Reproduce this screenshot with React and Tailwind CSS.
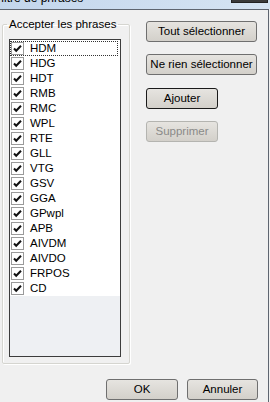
import React from 'react';

const phrases = [
  'HDM', 'HDG', 'HDT', 'RMB', 'RMC', 'WPL', 'RTE', 'GLL', 'VTG',
  'GSV', 'GGA', 'GPwpl', 'APB', 'AIVDM', 'AIVDO', 'FRPOS', 'CD',
];

const CheckBox = () => (
  <span className="flex h-[13px] w-[13px] shrink-0 items-center justify-center border border-[#9a9a9a] bg-white">
    <svg width="9" height="9" viewBox="0 0 9 9">
      <path d="M1 4.5 L3.2 6.8 L8 1.8" fill="none" stroke="#111" strokeWidth="2" />
    </svg>
  </span>
);

const WinButton = ({ children, width, isDefault, disabled }) => (
  <div
    className={`flex h-[21px] items-center justify-center rounded-[3px] border bg-gradient-to-b from-[#e6e4e0] to-[#d3d0ca] text-[11.5px] ${width} ${
      isDefault ? 'border-[#1a1a1a]' : disabled ? 'border-[#b4b4b0]' : 'border-[#6f6f6f]'
    } ${disabled ? 'text-[#8a8a88]' : 'text-black'}`}
  >
    {children}
  </div>
);

export default function App() {
  return (
    <div
      className="relative flex h-[402px] w-[270px] flex-col overflow-hidden bg-[#f0f0f0] text-black"
      style={{ fontFamily: '"Liberation Sans", Arial, sans-serif' }}
    >
      {/* Title bar (cut off) */}
      <div className="h-[9px] shrink-0 overflow-hidden bg-gradient-to-r from-[#c3d6ec] to-[#d6e4f3]">
        <div className="-mt-[9px] -ml-[6px] text-[12px] leading-[14px]">Filtre de phrases</div>
      </div>
      <div className="absolute right-[2px] top-0 h-[3px] w-[37px] border-b border-l border-r border-[#222] bg-[#3a3a3a]" />

      {/* Client area */}
      <div className="mr-[1px] flex flex-1 flex-col border-t border-r border-[#5e6570]">
        <div className="flex">
          <fieldset className="ml-[2px] mt-[8px] h-[346px] w-[128px] rounded-[2px] border border-[#d5d5d0] shadow-[inset_1px_1px_0_#fff,1px_1px_0_#fff]">
            <legend className="ml-[4px] px-[2px] text-[11.5px] leading-[13px]">Accepter les phrases</legend>
            <div className="ml-[6px] mt-[8px] flex h-[318px] w-[112px] flex-col border border-[#3c3c3c] bg-[#eef0f3]">
              <div className="flex flex-col bg-white pt-[1px]">
                {phrases.map((p, i) => (
                  <div
                    key={p}
                    className={`mr-[2px] flex h-[15px] items-center gap-[6px] pl-[1px] text-[11.5px] ${
                      i === 0 ? 'outline outline-1 outline-dotted outline-[#333] -outline-offset-1' : ''
                    }`}
                  >
                    <CheckBox />
                    <span className="leading-none">{p}</span>
                  </div>
                ))}
              </div>
            </div>
          </fieldset>

          <div className="ml-[16px] mt-[11px] flex flex-col">
            <WinButton width="w-[111px]">Tout sélectionner</WinButton>
            <div className="mt-[12px]">
              <WinButton width="w-[111px]">Ne rien sélectionner</WinButton>
            </div>
            <div className="mt-[13px]">
              <WinButton width="w-[72px]" isDefault>Ajouter</WinButton>
            </div>
            <div className="mt-[12px]">
              <WinButton width="w-[72px]" disabled>Supprimer</WinButton>
            </div>
          </div>
        </div>

        <div className="mt-[15px] flex justify-end gap-[9px] pr-[10px]">
          <WinButton width="w-[72px]">OK</WinButton>
          <WinButton width="w-[71px]">Annuler</WinButton>
        </div>
      </div>
    </div>
  );
}
